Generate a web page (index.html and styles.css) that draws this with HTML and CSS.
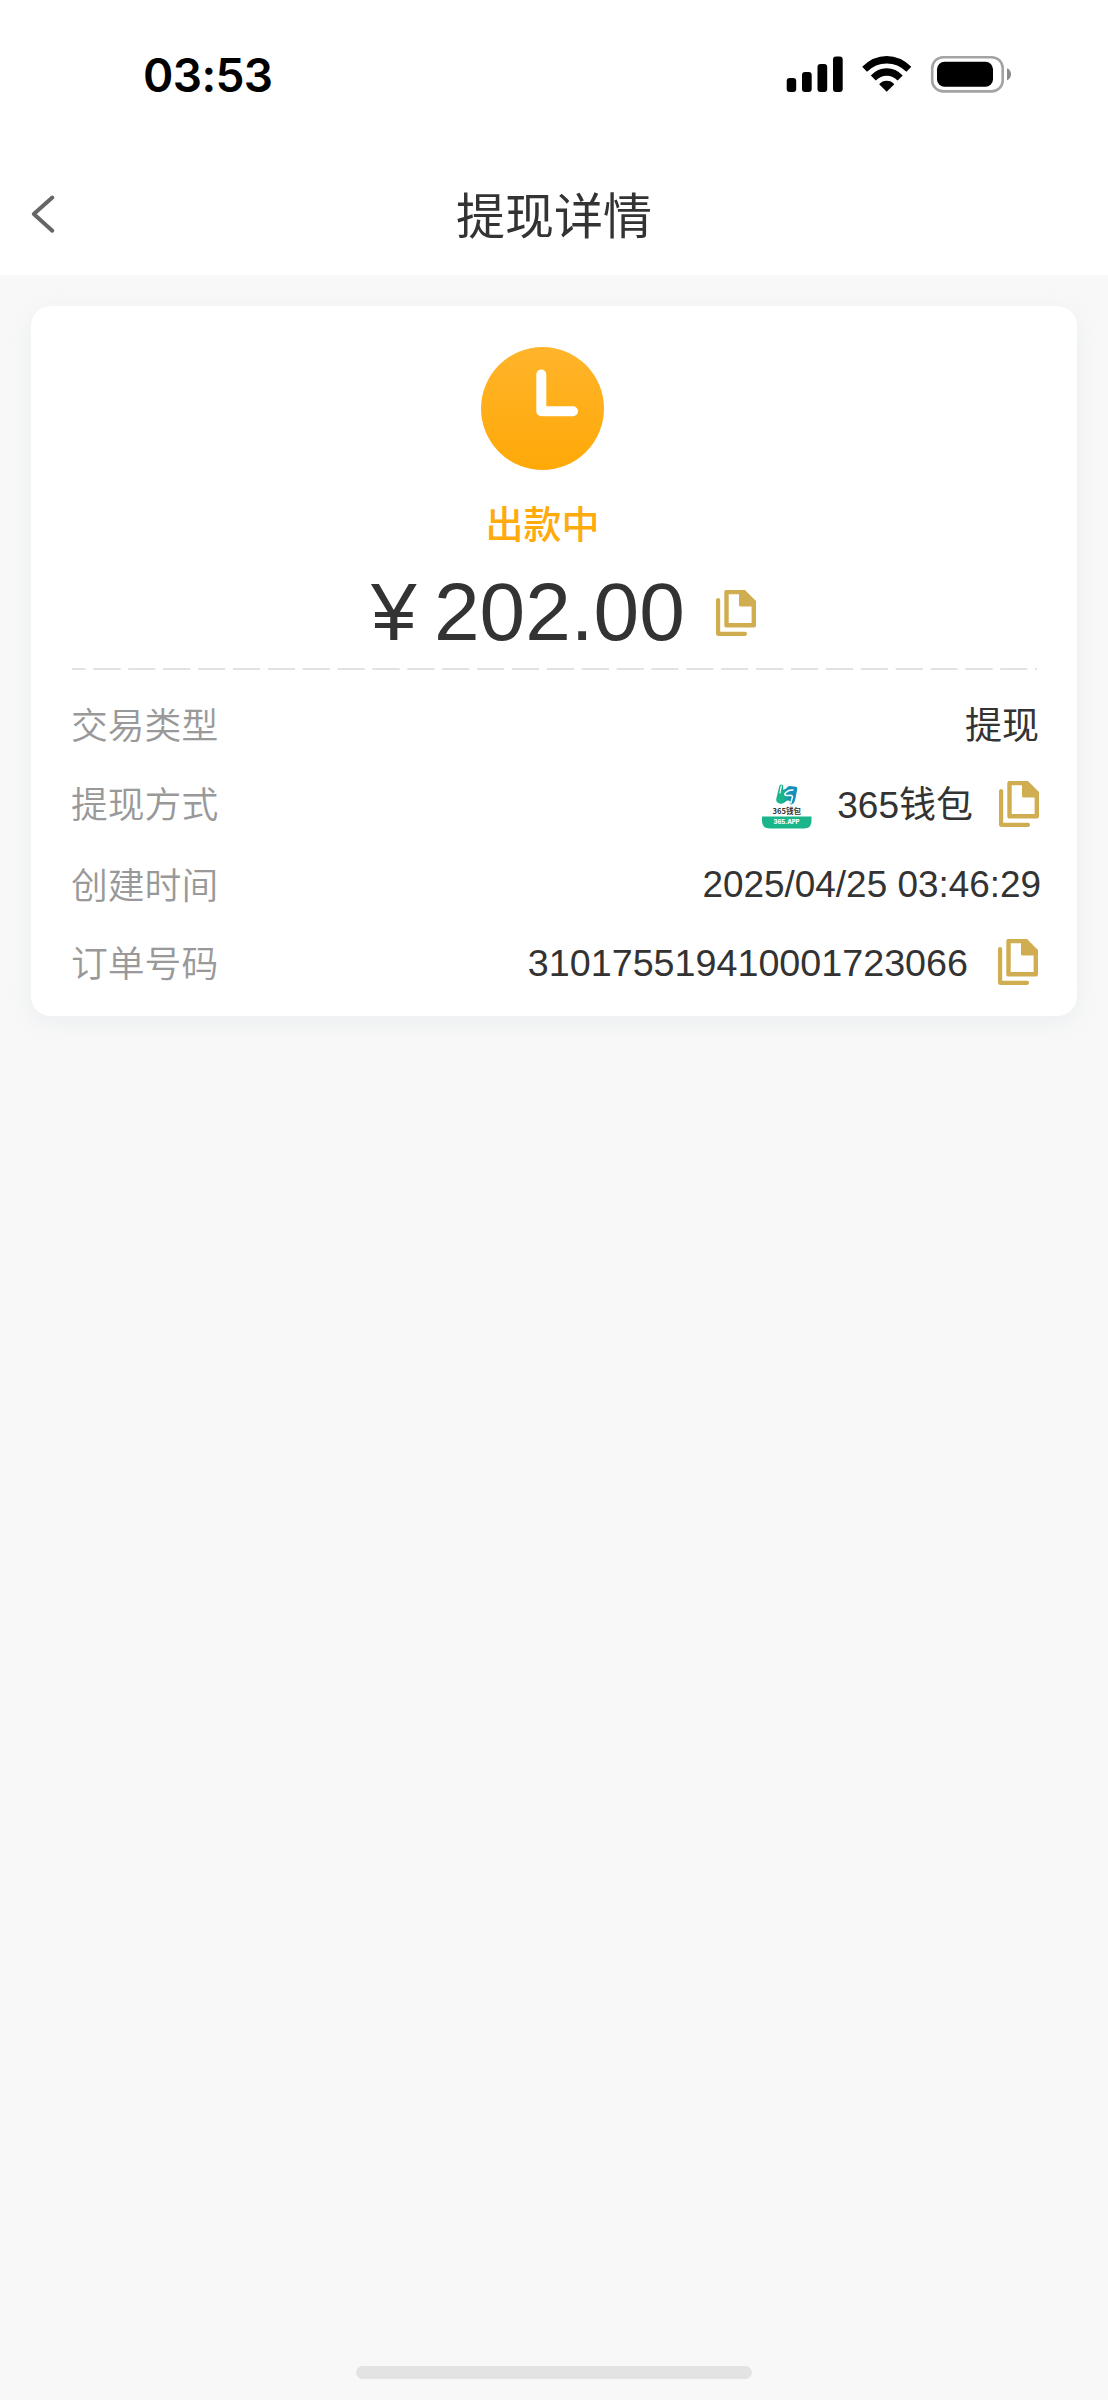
FILE: index.html
```html
<!DOCTYPE html>
<html lang="zh-CN">
<head>
<meta charset="utf-8">
<title>提现详情</title>
<link rel="stylesheet" href="styles.css">
</head>
<body>
<svg class="defs" width="0" height="0" aria-hidden="true">
  <symbol id="copy" viewBox="0 0 40 46">
    <path d="M2.100 10V43.800H29" fill="none" stroke="#d0ad50" stroke-width="4.200" stroke-linecap="round" stroke-linejoin="round"/>
    <path fill="#d0ad50" fill-rule="evenodd" d="M10 0H29L40 11V35.5Q40 37.500 38 37.500H10Q8.300 37.500 8.300 35.500V2Q8.300 0 10 0ZM12.700 4.200V33H35.600V16.500H24.500Q23 16.500 23 15V4.200Z"/>
  </symbol>
</svg>
<div class="screen">
  <header class="top">
    <div class="status">
      <span class="time">03:53</span>
      <svg class="indicators" width="226" height="38" viewBox="786 55 226 38">
        <rect x="786.700" y="78" width="9.500" height="14" rx="3"/>
        <rect x="802" y="72" width="9.700" height="20" rx="3"/>
        <rect x="817.500" y="64" width="9.700" height="28" rx="3"/>
        <rect x="833" y="56.500" width="9.700" height="35.500" rx="3"/>
        <path d="M862.200 66.800Q873 56 886.700 56T911.300 66.800L906.400 71.800Q898 63.500 886.700 63.500T867 71.800Z"/>
        <path d="M870.800 75.500Q877.500 68.300 886.700 68.300T902.700 75.500L897.600 80.500Q893 75.800 886.700 75.800T875.800 80.500Z"/>
        <path d="M879.200 84.200Q882.200 80.800 886.700 80.800T894.300 84.200L886.700 91.800Z"/>
        <rect x="932.200" y="57.200" width="70.500" height="34.200" rx="11" fill="none" stroke="#a3a3a3" stroke-width="2.600"/>
        <rect x="937" y="61.800" width="56" height="25" rx="7.500"/>
        <path d="M1007 68.200Q1011 70 1011 74.200T1007 80.300Z" fill="#8c8c8c"/>
      </svg>
    </div>
    <div class="nav">
      <svg class="back" width="26" height="40" viewBox="30 194 26 40"><path d="M52.300 197.500L33.800 214L52.300 230.700" fill="none" stroke="#666" stroke-width="4" stroke-linecap="round" stroke-linejoin="round"/></svg>
      <h1>提现详情</h1>
    </div>
  </header>
  <main class="card">
    <section class="summary">
      <svg width="123" height="123" viewBox="0 0 123 123">
        <defs><linearGradient id="amber" x2="0" y2="1"><stop stop-color="#ffb42a"/><stop offset="1" stop-color="#ffa908"/></linearGradient></defs>
        <circle cx="61.500" cy="61.500" r="61.500" fill="url(#amber)"/>
        <path d="M60.300 27.500V64.300H92" fill="none" stroke="#fff" stroke-width="10" stroke-linecap="round" stroke-linejoin="round"/>
      </svg>
      <p class="state">出款中</p>
      <div class="amount"><span class="yen">¥</span><span class="sum">202.00</span><svg class="copy"><use href="#copy"/></svg></div>
    </section>
    <svg class="divider" width="965" height="2"><path d="M0 1H965" stroke="#e2e2e2" stroke-width="2" stroke-dasharray="27.200 7.680" stroke-dashoffset="13.500"/></svg>
    <dl class="details">
      <div class="row"><dt>交易类型</dt><dd class="cjk">提现</dd></div>
      <div class="row"><dt>提现方式</dt><dd class="wallet">
        <svg class="logo" width="50" height="50" viewBox="0 0 50 50">
          <defs><linearGradient id="swirl" x1="0" y1=".4" x2="1" y2=".3"><stop offset=".3" stop-color="#1ab58a"/><stop offset=".6" stop-color="#1690b8"/></linearGradient></defs>
          <path d="M0 37.500H49.500V42Q49.500 49.500 42 49.500H8Q0 49.500 0 42Z" fill="#1ab58a"/>
          <path d="M17.500 6.500Q19.500 4.500 21.300 6.800L21 10.500Q23 11 25 8.500Q27 6.500 30 7.200L34 7.800Q35.600 8.200 35.300 10L33 21.500Q32 25 29 25.500Q27.500 25.500 27.800 23.500L28 22.500Q26 20.500 23.500 22.800Q20.500 25.500 17.500 24.500Q13.500 23.500 14.300 19.500Z" fill="url(#swirl)"/>
          <path d="M31 11Q26.500 10.800 24.300 13.200Q21.500 15.300 23.800 16.300Q26 16.800 28.500 16.300Q31.500 16.500 30 19.500L28.800 24" fill="none" stroke="#fff" stroke-width="1.500" stroke-linecap="round"/>
          <path d="M19.300 7.200L18 14" fill="none" stroke="#fff" stroke-width="1.200" stroke-linecap="round"/>
          <text class="logo-name" x="10.500" y="35" textLength="28.500" lengthAdjust="spacingAndGlyphs">365钱包</text>
          <text class="logo-app" x="11.500" y="44.800" textLength="26" lengthAdjust="spacingAndGlyphs">365.APP</text>
        </svg>
        <span class="name">365钱包</span><svg class="copy"><use href="#copy"/></svg></dd></div>
      <div class="row"><dt>创建时间</dt><dd class="date">2025/04/25 03:46:29</dd></div>
      <div class="row"><dt>订单号码</dt><dd class="order"><span>310175519410001723066</span><svg class="copy"><use href="#copy"/></svg></dd></div>
    </dl>
  </main>
  <div class="home"></div>
</div>
</body>
</html>
```
FILE: styles.css
```css
* { box-sizing: border-box; margin: 0; padding: 0; }
body { background: #f8f8f8; color: #333; font-family: "Liberation Sans", "Noto Sans CJK SC", sans-serif; }
svg { display: block; flex: none; }
.defs { height: 0; }
.screen { width: 1108px; height: 2400px; display: flex; flex-direction: column; }
.top { height: 275px; background: #fff; }
.status { height: 152px; padding: 0 96px 0 143px; display: flex; justify-content: space-between; align-items: center; }
.time { font: 600 46px/60px Inter, sans-serif; letter-spacing: -.6px; color: #000; margin-bottom: 2px; }
.indicators { margin-bottom: 4px; }
.nav { height: 123px; display: grid; grid-template-columns: 196px 1fr 196px; align-items: start; }
.back { margin: 42px 0 0 30px; }
h1 { font: 400 49px/72px "Noto Sans CJK SC", sans-serif; text-align: center; margin-top: 25px; }
.card { width: 1046px; height: 710px; margin: 31px 0 0 31px; padding: 41px 36px 0 41px; background: #fff; border-radius: 20px; box-shadow: 0 6px 24px rgba(190, 205, 215, .22); }
.summary { height: 321px; display: flex; flex-direction: column; align-items: center; }
.summary > svg { margin-right: 28px; }
.state { font: 500 38px/56px "Noto Sans CJK SC", sans-serif; color: #ffaa0d; margin: 24px 28px 0 0; }
.amount { align-self: stretch; display: flex; align-items: center; height: 94px; margin-top: 15px; padding-left: 299px; font-size: 82px; line-height: 94px; }
.yen { width: 63px; }
.copy { width: 40px; height: 46px; }
.amount .copy { margin: 1px 0 0 31px; }
.divider { margin-bottom: 15px; }
.row { height: 79px; display: flex; justify-content: space-between; align-items: center; }
.row:nth-child(2) { height: 80px; }
.row:nth-child(3) { height: 81px; }
.row:nth-child(4) { height: 76px; }
dt { font: 350 36.800px/54px "Noto Sans CJK SC", "Noto Sans CJK SC DemiLight", sans-serif; color: #999; margin: 0 0 4px -1px; }
dd { font-size: 37px; line-height: 54px; display: flex; align-items: center; }
.cjk { font-family: "Noto Sans CJK SC", sans-serif; margin: 0 2px 4px 0; }
.wallet .logo { margin-right: 25px; }
.wallet .name { margin-top: 3px; }
.wallet .copy { margin: 0 2px 1px 26px; }
.date { font-size: 36.900px; }
.order { font-size: 37.700px; }
.order .copy { margin: 0 3px 2px 30px; }
.logo-name { font: 700 7.500px "Noto Sans CJK SC", sans-serif; fill: #333; }
.logo-app { font: 800 5.800px Inter, sans-serif; fill: #fff; }
.home { width: 396px; height: 13px; border-radius: 7px; background: #e3e3e3; margin: auto auto 21px; }
```
